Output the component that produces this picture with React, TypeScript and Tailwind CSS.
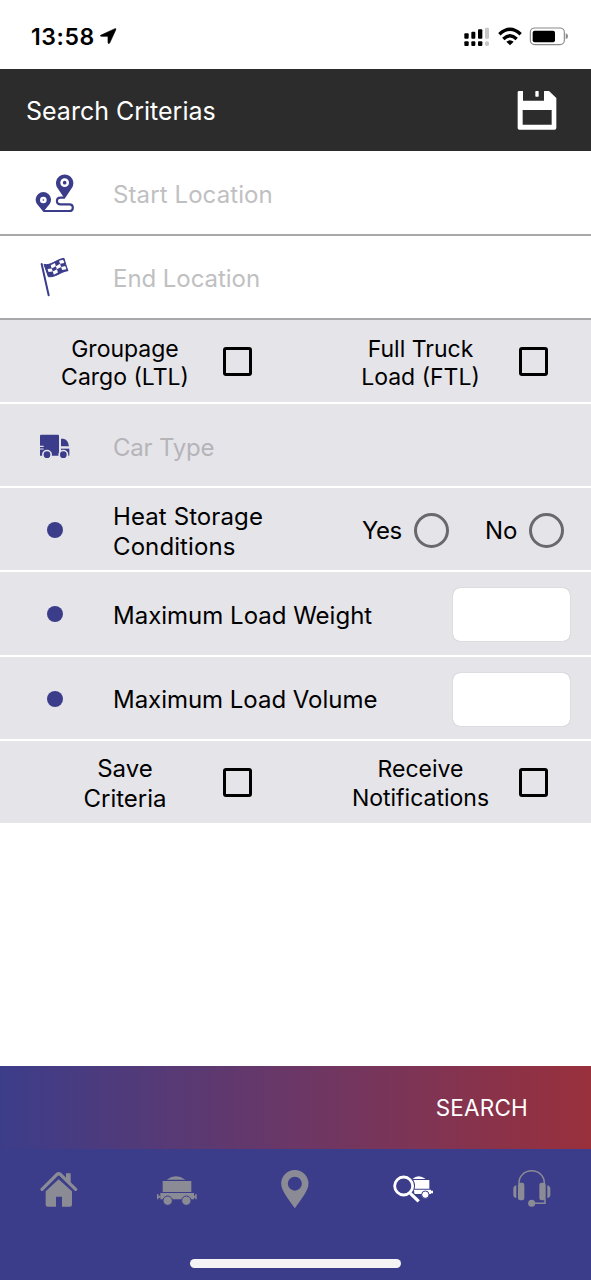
import type { ReactNode } from "react";

const flagChecks: string[] = (() => {
  const point = (u: number, v: number) => {
    const bend = Math.sin(u * Math.PI * 2) * 3;
    const x = 136 + u * 57 + v * 12;
    const y = 345 - u * 18 + v * 36 + bend;
    return `${x.toFixed(1)},${y.toFixed(1)}`;
  };
  const cells: string[] = [];
  for (let c = 0; c < 4; c++) {
    for (let r = 0; r < 3; r++) {
      if ((c + r) % 2 === 1) {
        const u0 = 0.04 + c * 0.22;
        const v0 = 0.1 + r * 0.26;
        cells.push(
          [point(u0, v0), point(u0 + 0.22, v0), point(u0 + 0.22, v0 + 0.26), point(u0, v0 + 0.26)].join(" ")
        );
      }
    }
  }
  return cells;
})();

function SignalIcon() {
  return (
    <svg className="h-[20px] w-[26px]" viewBox="72 80 78 60">
      <g fill="#000">
        <rect x="73" y="99" width="13" height="16" rx="3" />
        <rect x="94" y="94" width="12" height="21" rx="3" />
        <rect x="114" y="87" width="13" height="28" rx="3" />
        <rect x="73" y="123" width="13" height="14" rx="3" />
        <rect x="94" y="123" width="12" height="14" rx="3" />
        <rect x="114" y="123" width="13" height="14" rx="3" />
      </g>
      <g fill="#c8c8c8">
        <rect x="135" y="82" width="12" height="33" rx="3" />
        <rect x="135" y="123" width="12" height="14" rx="5" />
      </g>
    </svg>
  );
}

function WifiIcon() {
  return (
    <svg className="h-[20px] w-[24px]" viewBox="174 80 72 60">
      <g fill="none" stroke="#000" strokeWidth="10">
        <path d="M178 102Q210 72 242 102" />
        <path d="M190 116Q210 97 230 116" />
      </g>
      <path d="M199 124Q210 115 221 124L210 135Z" />
    </svg>
  );
}

function BatteryIcon() {
  return (
    <svg className="h-[20px] w-[40px]" viewBox="268 80 120 60">
      <rect x="272" y="83" width="102" height="50" rx="13" fill="none" stroke="#8a8a8a" strokeWidth="3.5" />
      <rect x="279" y="91" width="67" height="35" rx="6" />
      <path d="M378 99Q385 101 385 108T378 117Z" fill="#8a8a8a" />
    </svg>
  );
}

function SaveIcon() {
  return (
    <svg className="h-[40px] w-[40px]" viewBox="232 270 120 120">
      <path
        fill="#fff"
        fillRule="evenodd"
        d="M238 273H250V302H313V273H328L350 294V384Q350 389 345 389H239Q234 389 234 384V277Q234 273 238 273ZM249 330V374H336V330Z"
      />
      <rect x="287" y="273" width="10" height="17" rx="2" fill="#fff" />
    </svg>
  );
}

function RouteIcon() {
  return (
    <svg className="h-[40px] w-[40px]" viewBox="105 70 120 120">
      <path
        d="M130 184H208C222 184 222 164 208 164H182C167 164 167 144 182 144H194"
        fill="none"
        stroke="#3c3d8a"
        strokeWidth="6.5"
      />
      <path d="M194 147L172 114A26 26 0 1 1 216 114Z" fill="#3c3d8a" />
      <path d="M130 186L111 163A23 23 0 1 1 149 163Z" fill="#3c3d8a" />
      <circle cx="194" cy="99" r="13" fill="#fff" />
      <circle cx="194" cy="99" r="5.5" fill="#3c3d8a" />
      <circle cx="130" cy="151" r="10" fill="#fff" />
      <circle cx="130" cy="151" r="2.5" fill="#3c3d8a" />
    </svg>
  );
}

function FlagIcon() {
  return (
    <svg className="h-[40px] w-[40px]" viewBox="105 322 120 120">
      <path d="M125 343L146 437" stroke="#3c3d8a" strokeWidth="6" strokeLinecap="round" />
      <path
        d="M132 344C152 350 170 328 192 326C196 340 199 352 204 363C182 366 166 384 145 381Z"
        fill="#3c3d8a"
        stroke="#3c3d8a"
        strokeWidth="3"
      />
      {flagChecks.map((points) => (
        <polygon key={points} points={points} fill="#fff" />
      ))}
    </svg>
  );
}

function TruckIcon() {
  return (
    <svg className="h-[26px] w-[32px]" viewBox="117 340 96 78">
      <g fill="#3c3d8a">
        <path d="M123 342H174Q177 342 177 345V405H120V345Q120 342 123 342Z" />
        <path d="M183 354H190Q204 356 207 377H183Z" />
        <path d="M183 384H208V405H183Z" />
      </g>
      <path d="M118 377H131M118 385H131" stroke="#e5e4e9" strokeWidth="3.5" />
      <g fill="#3c3d8a" stroke="#e5e4e9" strokeWidth="5">
        <circle cx="141" cy="402" r="12.5" />
        <circle cx="190" cy="402" r="12.5" />
      </g>
    </svg>
  );
}

function HomeIcon() {
  return (
    <svg className="h-[40px] w-[40px] overflow-visible" viewBox="57 60 120 120">
      <path
        fill="#8b8b96"
        d="M116 88L156 124V164Q156 170 150 170H126V140H108V170H83Q77 170 77 164V124Z"
      />
      <path
        d="M66 118L111 73Q116 69 121 73L167 118"
        fill="none"
        stroke="#3c3d8a"
        strokeWidth="16"
        strokeLinecap="round"
        strokeLinejoin="round"
      />
      <path
        d="M66 118L111 73Q116 69 121 73L167 118"
        fill="none"
        stroke="#8b8b96"
        strokeWidth="10"
        strokeLinecap="round"
        strokeLinejoin="round"
      />
      <path d="M138 70H152V100L138 88Z" fill="#8b8b96" />
    </svg>
  );
}

function WagonIcon() {
  return (
    <svg className="h-[40px] w-[40px] overflow-visible" viewBox="411 60 120 120">
      <g fill="#8b8b96">
        <path d="M440 89Q468 69 496 89Z" />
        <rect x="428" y="93" width="86" height="33" />
        <path d="M421 129H522V148H421Z" />
        <path d="M411 132H415V137H421V143H415V148H411ZM530 132H526V137H520V143H526V148H530Z" />
      </g>
      <g fill="#8b8b96" stroke="#3c3d8a" strokeWidth="3">
        <circle cx="443" cy="152" r="14" />
        <circle cx="499" cy="152" r="14" />
      </g>
    </svg>
  );
}

function PinIcon() {
  return (
    <svg className="h-[40px] w-[40px] overflow-visible" viewBox="46.5 60 120 120">
      <path
        fill="#8b8b96"
        fillRule="evenodd"
        d="M106 60A41 41 0 0 1 147 101C147 123 119 155 106 175C93 155 65 123 65 101A41 41 0 0 1 106 60ZM106 80A21 21 0 1 0 106 122A21 21 0 1 0 106 80Z"
      />
    </svg>
  );
}

function WagonSearchIcon() {
  return (
    <svg className="h-[40px] w-[40px] overflow-visible" viewBox="401 60 120 120">
      <g fill="#fff">
        <path d="M456 87Q474 71 496 87Z" />
        <path d="M459 90H507V116H463Q467 103 459 90Z" />
        <path d="M461 119H512V122H518V130H512V132H462Z" />
      </g>
      <circle cx="495" cy="134" r="11" fill="#fff" stroke="#3c3d8a" strokeWidth="3" />
      <path d="M450 130L476 155" stroke="#3c3d8a" strokeWidth="16" />
      <path d="M450 130L475 154" stroke="#fff" strokeWidth="10" />
      <circle cx="430" cy="108" r="27" fill="#3c3d8a" stroke="#fff" strokeWidth="8.5" />
    </svg>
  );
}

function HeadsetIcon() {
  return (
    <svg className="h-[40px] w-[40px] overflow-visible" viewBox="755 60 120 120">
      <g fill="none" stroke="#8b8b96" strokeWidth="4.5">
        <path d="M776 102V98A38 36 0 0 1 852 98V102" />
        <path d="M854 146V160H820" />
      </g>
      <g fill="#8b8b96">
        <rect x="773" y="98" width="19" height="53" rx="7" />
        <rect x="837" y="98" width="19" height="53" rx="7" />
        <path d="M768 106V144Q759 142 759 134V116Q759 108 768 106Z" />
        <path d="M861 106V144Q870 142 870 134V116Q870 108 861 106Z" />
        <circle cx="814" cy="160" r="10.5" />
      </g>
    </svg>
  );
}

function Row({ className, children }: { className: string; children: ReactNode }) {
  return <div className={`flex shrink-0 items-center ${className}`}>{children}</div>;
}

function Checkbox() {
  return (
    <button
      type="button"
      role="checkbox"
      aria-checked="false"
      className="size-[29px] shrink-0 rounded-[3px] border-3 border-black"
    />
  );
}

function Radio() {
  return (
    <button
      type="button"
      role="radio"
      aria-checked="false"
      className="size-[35px] shrink-0 rounded-full border-3 border-[#69696b]"
    />
  );
}

function Lead({ children }: { children: ReactNode }) {
  return <div className="flex w-[113px] shrink-0 items-center pl-[35px]">{children}</div>;
}

function Bullet() {
  return <span className="ml-[12px] size-[16px] rounded-full bg-[#3c3d8a]" />;
}

export default function App() {
  return (
    <div className="flex h-[1280px] w-[591px] flex-col overflow-hidden bg-white font-['Inter',sans-serif] text-[24px] text-black">
      <div className="flex h-[69px] shrink-0 items-start pt-[26px] pl-[31px]">
        <span className="mt-[-1px] w-[64px] text-[23px] leading-[24px] font-semibold tracking-[0.6px]">13:58</span>
        <svg className="mt-[2px] ml-[5px] h-[16px] w-[17px]" viewBox="301 84 51 48">
          <path d="M303 106L346 86Q350 85 348 90L330 129Q326 134 325 127V109H306Q301 109 303 106Z" stroke="#000" strokeWidth="2" />
        </svg>
        <div className="mt-px ml-auto flex pr-[22px]">
          <SignalIcon />
          <span className="w-[8px]" />
          <WifiIcon />
          <span className="w-[7px]" />
          <BatteryIcon />
        </div>
      </div>

      <header className="flex h-[82px] shrink-0 items-center justify-between bg-[#2c2c2c] pr-[34px] pl-[26px] text-white">
        <h1 className="pt-[3px] text-[25px]">Search Criterias</h1>
        <SaveIcon />
      </header>

      <Row className="h-[85px] border-b-2 border-[#a8a7a9]">
        <Lead>
          <RouteIcon />
        </Lead>
        <span className="pt-[4px] tracking-[0.1px] text-[#c0c0c2]">Start Location</span>
      </Row>
      <Row className="h-[84px] border-b-2 border-[#a8a7a9]">
        <Lead>
          <FlagIcon />
        </Lead>
        <span className="pt-[3px] tracking-[-0.05px] text-[#c0c0c2]">End Location</span>
      </Row>

      <Row className="h-[84px] border-b-2 border-white bg-[#e5e4e9] text-center text-[23px] leading-[28px]">
        <span className="ml-[47px] w-[156px] pt-[3px]">
          Groupage
          <br />
          Cargo (LTL)
        </span>
        <span className="ml-[20px] flex">
          <Checkbox />
        </span>
        <span className="ml-[90px] w-[157px] pt-[3px]">
          Full Truck
          <br />
          Load (FTL)
        </span>
        <span className="ml-[20px] flex">
          <Checkbox />
        </span>
      </Row>

      <Row className="h-[84px] border-b-2 border-white bg-[#e5e4e9]">
        <Lead>
          <span className="ml-[4px] flex pt-[3px]">
            <TruckIcon />
          </span>
        </Lead>
        <span className="pt-[5px] tracking-[-0.2px] text-[#b5b4b9]">Car Type</span>
      </Row>

      <Row className="h-[84px] border-b-2 border-white bg-[#e5e4e9] pt-[2px] leading-[30px]">
        <Lead>
          <Bullet />
        </Lead>
        <span className="w-[249px] pt-[3px] tracking-[0.1px]">
          Heat Storage
          <br />
          Conditions
        </span>
        <span className="w-[52px] pt-[2px] tracking-[-0.5px]">Yes</span>
        <Radio />
        <span className="ml-[36px] w-[44px] pt-[2px]">No</span>
        <Radio />
      </Row>

      <Row className="h-[85px] border-b-2 border-white bg-[#e5e4e9] pt-px">
        <Lead>
          <Bullet />
        </Lead>
        <span className="w-[340px] pt-[3px] whitespace-nowrap">Maximum Load Weight</span>
        <input className="h-[53px] w-[117px] rounded-[7px] bg-white shadow-[0_0_1px_#999]" />
      </Row>
      <Row className="h-[84px] border-b-2 border-white bg-[#e5e4e9] pt-[2px]">
        <Lead>
          <Bullet />
        </Lead>
        <span className="w-[340px] pt-[2px] tracking-[-0.03px] whitespace-nowrap">Maximum Load Volume</span>
        <input className="h-[53px] w-[117px] rounded-[7px] bg-white shadow-[0_0_1px_#999]" />
      </Row>

      <Row className="h-[82px] bg-[#e5e4e9] pt-px text-center leading-[29px]">
        <span className="ml-[47px] w-[156px] pt-[3px] leading-[30px]">
          Save
          <br />
          Criteria
        </span>
        <span className="ml-[20px] flex">
          <Checkbox />
        </span>
        <span className="ml-[90px] w-[157px] pt-[2px] text-[23px]">
          Receive
          <br />
          Notifications
        </span>
        <span className="ml-[20px] flex">
          <Checkbox />
        </span>
      </Row>

      <button
        type="button"
        className="mt-auto flex h-[83px] shrink-0 items-center justify-end bg-linear-to-r/srgb from-[#3c3d8a] via-[#6b3766] to-[#99303c] pr-[63px] text-[22.5px] text-white"
      >
        <span className="tracking-[0.2px]">SEARCH</span>
      </button>
      <nav className="flex h-[131px] shrink-0 flex-col items-center bg-[#3c3d8a]">
        <div className="grid h-[110px] w-full grid-cols-5 justify-items-center pt-[21px]">
          <HomeIcon />
          <WagonIcon />
          <PinIcon />
          <WagonSearchIcon />
          <HeadsetIcon />
        </div>
        <div className="h-[9px] w-[211px] rounded-full bg-[#f4f4f4]" />
      </nav>
    </div>
  );
}
